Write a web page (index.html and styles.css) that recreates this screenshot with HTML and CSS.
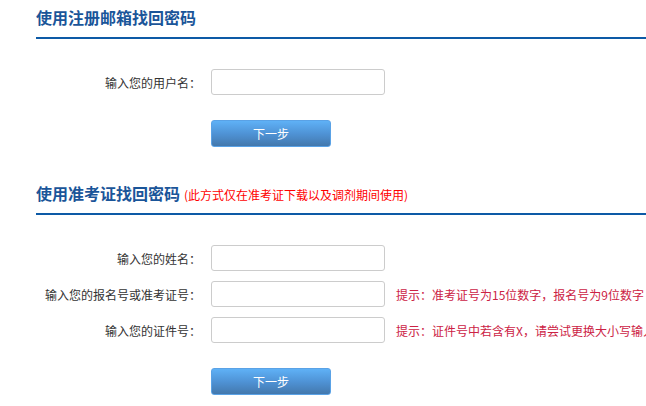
FILE: index.html
```html
<!DOCTYPE html>
<html lang="zh-CN">
<head>
<meta charset="utf-8">
<title>找回密码</title>
<link rel="stylesheet" href="styles.css">
</head>
<body>
<div class="page">
  <section class="block">
    <h2 class="block-title">使用注册邮箱找回密码</h2>
    <div class="form">
      <div class="row">
        <label class="label">输入您的用户名：</label>
        <input class="field" type="text">
      </div>
      <div class="actions"><button class="btn" type="button">下一步</button></div>
    </div>
  </section>
  <section class="block second">
    <h2 class="block-title">使用准考证找回密码<span class="note">(此方式仅在准考证下载以及调剂期间使用)</span></h2>
    <div class="form">
      <div class="row">
        <label class="label">输入您的姓名：</label>
        <input class="field" type="text">
      </div>
      <div class="row">
        <label class="label">输入您的报名号或准考证号：</label>
        <input class="field" type="text">
        <span class="hint">提示：准考证号为15位数字，报名号为9位数字</span>
      </div>
      <div class="row">
        <label class="label">输入您的证件号：</label>
        <input class="field" type="text">
        <span class="hint">提示：证件号中若含有X，请尝试更换大小写输入</span>
      </div>
      <div class="actions"><button class="btn" type="button">下一步</button></div>
    </div>
  </section>
</div>
</body>
</html>
```
FILE: styles.css
```css
html, body {
  margin: 0;
  padding: 0;
  overflow: hidden;
  background: #fff;
}
body {
  font-family: "Noto Sans CJK SC", "Microsoft YaHei", sans-serif;
  font-size: 12px;
  color: #333;
}
.page {
  padding: 5px 0 0 36px;
}
.block-title {
  margin: 0;
  height: 24px;
  font-size: 16px;
  line-height: 24px;
  font-weight: bold;
  color: #1a5599;
  padding-bottom: 8px;
  border-bottom: 2px solid #0d5aa6;
  white-space: nowrap;
}
.note {
  font-size: 12px;
  line-height: 12px;
  font-weight: normal;
  color: #ff0000;
  margin-left: 4px;
}
.second {
  margin-top: 34px;
}
.form {
  padding-top: 30px;
  display: flex;
  flex-direction: column;
  gap: 10px;
}
.row {
  display: grid;
  grid-template-columns: 165px 174px auto;
  column-gap: 10px;
  align-items: center;
  height: 26px;
}
.label {
  text-align: right;
  white-space: nowrap;
  color: #333;
}
.field {
  box-sizing: border-box;
  width: 174px;
  height: 26px;
  margin: 0;
  border: 1px solid #cccccc;
  border-radius: 3px;
  background: #fff;
  padding: 0 6px;
  font: inherit;
}
.hint {
  margin-left: 1px;
  color: #cc2244;
  white-space: nowrap;
}
.actions {
  padding: 15px 0 0 175px;
}
.btn {
  box-sizing: border-box;
  width: 120px;
  height: 27px;
  border: 1px solid #5aa2e6;
  border-radius: 3px;
  background: linear-gradient(to bottom, #5fb1f6 0%, #4f93d6 50%, #4378ad 100%);
  color: #fff;
  font-family: inherit;
  font-size: 12px;
  padding: 0;
  cursor: pointer;
}
```
